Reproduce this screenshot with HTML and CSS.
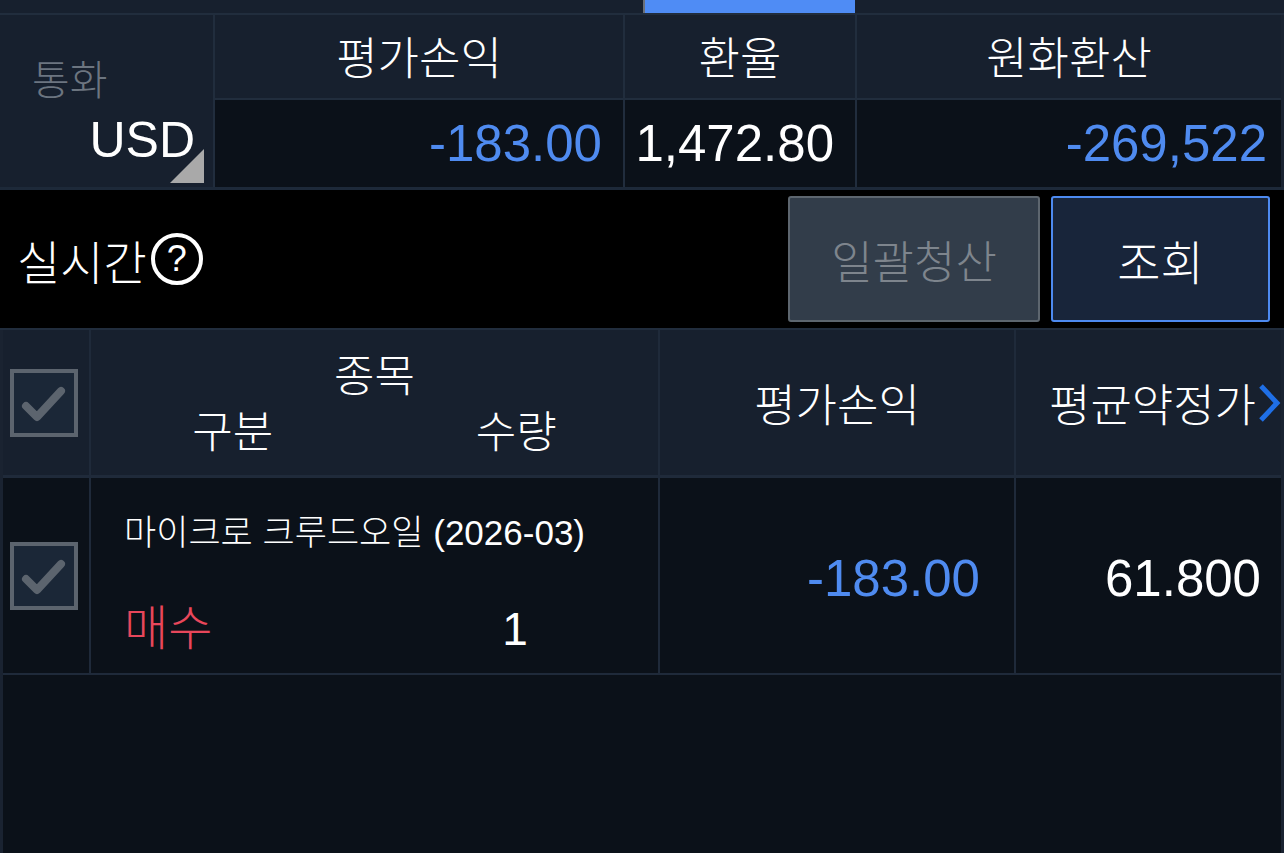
FILE: index.html
```html
<!DOCTYPE html>
<html lang="ko">
<head>
<meta charset="utf-8">
<title>잔고</title>
<link rel="stylesheet" href="styles.css">
</head>
<body>
<div class="app">
  <div class="tabbar">
    <div class="tab"></div>
    <div class="tab"></div>
    <div class="tab"></div>
    <div class="tab tab-active"></div>
    <div class="tab"></div>
    <div class="tab"></div>
  </div>

  <div class="summary">
    <div class="currency">
      <span class="currency-label">통화</span>
      <span class="currency-value">USD</span>
      <span class="corner"></span>
    </div>
    <div class="sum-grid">
      <div class="sum-head">평가손익</div>
      <div class="sum-head">환율</div>
      <div class="sum-head">원화환산</div>
      <div class="sum-val blue">-183.00</div>
      <div class="sum-val">1,472.80</div>
      <div class="sum-val blue last">-269,522</div>
    </div>
  </div>

  <div class="toolbar">
    <div class="realtime">실시간<span class="help">?</span></div>
    <div class="actions">
      <button class="btn btn-disabled">일괄청산</button>
      <button class="btn btn-primary">조회</button>
    </div>
  </div>

  <div class="table">
    <div class="row-grid thead">
      <div class="cell check-cell">
        <span class="checkbox"><svg viewBox="0 0 60 60" width="60" height="60"><polyline points="12,33 23,44 47,18" fill="none" stroke="#5c646e" stroke-width="8" stroke-linecap="round" stroke-linejoin="round"/></svg></span>
      </div>
      <div class="cell name-head">
        <div class="nh-top">종목</div>
        <div class="nh-bottom"><span>구분</span><span>수량</span></div>
      </div>
      <div class="cell center">평가손익</div>
      <div class="cell center last-head">평균약정가<svg class="chev" viewBox="0 0 24 42" width="24" height="42"><polyline points="4,4 20,21 4,38" fill="none" stroke="#1f6fe6" stroke-width="5"/></svg></div>
    </div>

    <div class="row-grid tbody">
      <div class="cell check-cell">
        <span class="checkbox"><svg viewBox="0 0 60 60" width="60" height="60"><polyline points="12,33 23,44 47,18" fill="none" stroke="#5c646e" stroke-width="8" stroke-linecap="round" stroke-linejoin="round"/></svg></span>
      </div>
      <div class="cell name-cell">
        <div class="item-name">마이크로 크루드오일 (2026-03)</div>
        <div class="item-bottom"><span class="side-buy">매수</span><span class="qty">1</span></div>
      </div>
      <div class="cell num blue">-183.00</div>
      <div class="cell num">61.800</div>
    </div>

    <div class="empty"></div>
  </div>
</div>
</body>
</html>
```

FILE: styles.css
```css
* { box-sizing: border-box; margin: 0; padding: 0; }

html, body {
  width: 1284px;
  height: 853px;
  overflow: hidden;
  background: #0b1119;
}

body {
  font-family: "Liberation Sans", "Noto Sans CJK KR", sans-serif;
  font-weight: 300;
  color: #ffffff;
}

.app {
  display: flex;
  flex-direction: column;
  height: 853px;
}

/* top tab strip */
.tabbar {
  display: grid;
  grid-template-columns: repeat(6, 1fr);
  height: 15px;
  background: #17202e;
  border-bottom: 2px solid #212d3d;
}
.tab-active {
  background: #4f8cf5;
  border-left: 2px solid #6b7079;
  margin-left: 1px;
  margin-right: 1px;
}

/* summary */
.summary {
  display: flex;
  height: 175px;
  background: #17202e;
  border-bottom: 3px solid #1d2939;
}
.currency {
  position: relative;
  width: 215px;
  border-right: 2px solid #212d3d;
  display: flex;
  flex-direction: column;
  padding: 41px 18px 0 32px;
}
.currency-label {
  font-size: 41px;
  color: #6c7580;
  line-height: 50px;
}
.currency-value {
  align-self: flex-end;
  font-size: 50px;
  line-height: 56px;
  margin-top: 6px;
}
.corner {
  position: absolute;
  right: 9px;
  bottom: 4px;
  width: 0;
  height: 0;
  border-style: solid;
  border-width: 0 0 34px 34px;
  border-color: transparent transparent #a9a9a9 transparent;
}
.sum-grid {
  flex: 1;
  display: grid;
  grid-template-columns: 408px 232px 1fr;
  grid-template-rows: 85px 1fr;
  border-right: 3px solid #1a2331;
}
.sum-head {
  font-size: 45px;
  display: flex;
  align-items: center;
  justify-content: center;
  border-bottom: 2px solid #212d3d;
  padding-bottom: 2px;
}
.sum-head + .sum-head { border-left: 2px solid #212d3d; }
.sum-val {
  background: #0b1119;
  font-size: 51px;
  display: flex;
  align-items: center;
  justify-content: flex-end;
  padding-right: 21px;
  border-left: 2px solid #212d3d;
}
.sum-grid .sum-val:nth-child(4) { border-left: none; }
.sum-val.last { padding-right: 14px; }

.blue { color: #4f8bf0; }

/* toolbar */
.toolbar {
  height: 140px;
  background: #000000;
  display: flex;
  align-items: center;
  justify-content: space-between;
  padding: 0 14px 0 17px;
  border-bottom: 2px solid #212d3d;
}
.realtime {
  display: flex;
  align-items: center;
  font-size: 47px;
  gap: 4px;
}
.help {
  width: 52px;
  height: 52px;
  border: 4px solid #ffffff;
  border-radius: 50%;
  display: flex;
  align-items: center;
  justify-content: center;
  font-size: 36px;
  font-weight: normal;
  line-height: 1;
}
.actions {
  display: flex;
  gap: 11px;
}
.btn {
  height: 126px;
  font-family: inherit;
  font-weight: 300;
  font-size: 45px;
  border-radius: 3px;
  border: 2px solid;
}
.btn-disabled {
  width: 252px;
  background: #323d4a;
  border-color: #5d666f;
  color: #7e858d;
}
.btn-primary {
  width: 219px;
  background: #18253a;
  border-color: #4d8af0;
  color: #ffffff;
  font-size: 47px;
}

/* positions table */
.table {
  flex: 1;
  display: flex;
  flex-direction: column;
  border-left: 3px solid #1a2331;
  border-right: 3px solid #1a2331;
}
.row-grid {
  display: grid;
  grid-template-columns: 86px 569px 356px 1fr;
}
.cell + .cell { border-left: 2px solid #1f2a3a; }
.thead {
  height: 148px;
  background: #17202e;
  border-bottom: 3px solid #1f2a3a;
}
.tbody {
  height: 197px;
  background: #0b1119;
  border-bottom: 2px solid #1f2a3a;
}
.check-cell {
  display: flex;
  align-items: center;
  justify-content: flex-start;
  padding-left: 7px;
}
.checkbox {
  width: 68px;
  height: 68px;
  border: 4px solid #5c646e;
  background: #1b2737;
  display: flex;
}
.center {
  display: flex;
  align-items: center;
  justify-content: center;
  font-size: 45px;
}
.last-head {
  justify-content: flex-end;
  padding-right: 0;
}
.chev { margin-left: 1px; }

.name-head {
  display: flex;
  flex-direction: column;
  font-size: 44px;
  padding-top: 19px;
}
.nh-top {
  text-align: center;
  line-height: 56px;
}
.nh-bottom {
  display: grid;
  grid-template-columns: 1fr 1fr;
  text-align: center;
  line-height: 56px;
}

.name-cell {
  display: flex;
  flex-direction: column;
  padding: 32px 0 0 33px;
}
.item-name {
  font-size: 35px;
  line-height: 46px;
}
.item-bottom {
  display: grid;
  grid-template-columns: 1fr 1fr;
  margin-top: 44px;
  font-size: 48px;
  line-height: 58px;
}
.side-buy { color: #e8475b; }
.qty {
  font-size: 46px;
  text-align: center;
  padding-right: 19px;
}
.num {
  display: flex;
  align-items: center;
  justify-content: flex-end;
  font-size: 51px;
  padding-right: 34px;
  padding-top: 6px;
}
.num:last-child { padding-right: 20px; }

.empty {
  flex: 1;
  background: #0b1119;
}
```
